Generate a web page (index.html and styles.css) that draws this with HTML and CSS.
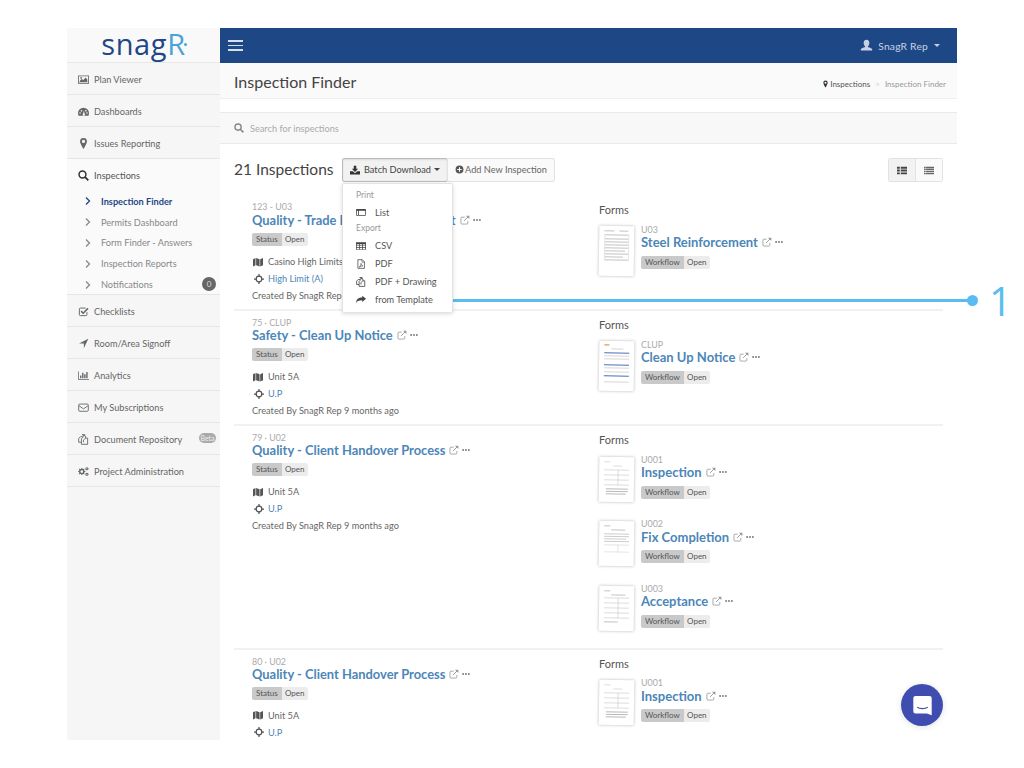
FILE: index.html
```html
<!DOCTYPE html>
<html>
<head>
    <meta charset="utf-8">
    <title>Inspection Finder</title>
    <link rel="stylesheet" href="styles.css">
</head>
<body>

<svg class="sprite" xmlns="http://www.w3.org/2000/svg">
    <symbol id="i-picture" viewBox="0 0 16 16"><path d="M0 2h16v12H0zM1.2 3.2v9.6h13.6V3.2z"/><path d="M2.5 11.5V10l3-3 2 2 3.5-4 2.500 3v3.500z"/><circle cx="4.500" cy="5.500" r="1.300"/></symbol>
    <symbol id="i-dash" viewBox="0 0 16 16"><path d="M8 2.500a8 8 0 0 0-8 8c0 1.300.3 2.400.8 3.500h14.400c.5-1.100.8-2.200.8-3.500a8 8 0 0 0-8-8zM3 9a1.200 1.200 0 1 1 0 2.400A1.200 1.200 0 0 1 3 9zm2-3.200a1.200 1.200 0 1 1 0 2.400 1.200 1.200 0 0 1 0-2.400zm6.500 0a1.200 1.200 0 1 1 0 2.400 1.200 1.200 0 0 1 0-2.400zM13 9a1.200 1.200 0 1 1 0 2.400A1.200 1.200 0 0 1 13 9zM8.600 6.500 9.500 11a1.700 1.700 0 1 1-2 0z"/></symbol>
    <symbol id="i-marker" viewBox="0 0 16 16"><path d="M8 0a5 5 0 0 0-5 5c0 3 5 11 5 11s5-8 5-11a5 5 0 0 0-5-5zm0 2.600a2.400 2.400 0 1 1 0 4.800 2.400 2.400 0 0 1 0-4.800z"/></symbol>
    <symbol id="i-search" viewBox="0 0 16 16"><circle cx="6.500" cy="6.500" r="5" fill="none" stroke="currentColor" stroke-width="2.200"/><path d="M10 10l5 5" fill="none" stroke="currentColor" stroke-width="2.600"/></symbol>
    <symbol id="i-chev" viewBox="0 0 8 10"><path d="M2 1.500 5.500 5 2 8.500" fill="none" stroke="currentColor" stroke-width="1.300"/></symbol>
    <symbol id="i-check" viewBox="0 0 16 16"><path d="M13 9v3.500a1.500 1.500 0 0 1-1.500 1.500h-8A1.500 1.500 0 0 1 2 12.500v-8A1.500 1.500 0 0 1 3.500 3H11" fill="none" stroke="currentColor" stroke-width="1.400"/><path d="M4.500 7.500 7.500 10.500 14.500 3.500" fill="none" stroke="currentColor" stroke-width="2.200"/></symbol>
    <symbol id="i-arrow" viewBox="0 0 16 16"><path d="M15 1 8.500 15V8H1.500z"/></symbol>
    <symbol id="i-chart" viewBox="0 0 16 16"><path d="M0 2h1.100v11H16v1.200H0z"/><path d="M3 8h2v4H3zM6 4h2v8H6zM9 6h2v6H9zM12 3h2v9h-2z"/></symbol>
    <symbol id="i-mail" viewBox="0 0 16 16"><rect x="1" y="3" width="14" height="10.500" rx="1.500" fill="none" stroke="currentColor" stroke-width="1.300"/><path d="M1.500 5.500 8 10l6.500-4.500" fill="none" stroke="currentColor" stroke-width="1.300"/></symbol>
    <symbol id="i-files" viewBox="0 0 16 16"><path d="M6 1h4L7 4H3.500L1 6.500V12h4v3h9V6h-3V3z" fill="none" stroke="currentColor" stroke-width="1.300"/><path d="M5 12V7l3-3M11 6 8 9v3" fill="none" stroke="currentColor" stroke-width="1.300"/></symbol>
    <symbol id="i-cogs" viewBox="0 0 16 16"><circle cx="5.500" cy="8" r="3" fill="none" stroke="currentColor" stroke-width="2"/><path d="M5.500 2.800v2M5.500 11.200v2M.3 8h2M8.700 8h2M1.800 4.300l1.400 1.400M7.800 10.300l1.400 1.400M9.200 4.300 7.800 5.700M3.200 10.300l-1.400 1.400" stroke="currentColor" stroke-width="1.500"/><circle cx="13" cy="4" r="1.600" fill="none" stroke="currentColor" stroke-width="1.500"/><circle cx="13" cy="12" r="1.600" fill="none" stroke="currentColor" stroke-width="1.500"/></symbol>
    <symbol id="i-download" viewBox="0 0 16 16"><path d="M6 1h4v5h3L8 11 3 6h3z"/><path d="M0 10h4.500L8 13l3.500-3H16v5H0z"/></symbol>
    <symbol id="i-plus" viewBox="0 0 16 16"><path d="M8 1a7 7 0 1 0 0 14A7 7 0 0 0 8 1zM7 4h2v3h3v2H9v3H7V9H4V7h3z"/></symbol>
    <symbol id="i-print" viewBox="0 0 16 16"><path d="M1.500 3h13A1.500 1.500 0 0 1 16 4.500v8a1.500 1.500 0 0 1-1.500 1.500h-13A1.500 1.500 0 0 1 0 12.500v-8A1.500 1.500 0 0 1 1.500 3zM1.200 6v6.800h2V6zm3.300 0v6.800h10.300V6z"/></symbol>
    <symbol id="i-table" viewBox="0 0 16 16"><path d="M0 2h16v12H0zM1.200 5v2h3.600V5zm4.800 0v2h4V5zm5.200 0v2h3.600V5zM1.200 8v2h3.600V8zM6 8v2h4V8zm5.200 0v2h3.600V8zM1.200 11v2h3.600v-2zM6 11v2h4v-2zm5.200 0v2h3.600v-2z"/></symbol>
    <symbol id="i-pdf" viewBox="0 0 16 16"><path d="M3 1h7l3.500 3.500V15H3z" fill="none" stroke="currentColor" stroke-width="1.200"/><path d="M9.500 1v4h4M5 13c2-1 3-4 3-6 .5 2 1.500 3.500 3 4-2 0-4 .8-6 2z" fill="none" stroke="currentColor"/></symbol>
    <symbol id="i-share" viewBox="0 0 16 16"><path d="M16 6 10 1v3C4 4 .5 6.500 0 13c1.500-3 4-4.500 10-4.500V11z"/></symbol>
    <symbol id="i-map" viewBox="0 0 16 16"><path d="M0 3.500 4 1.500v11.500L0 15zM5 1.500 10.500 3.500V15L5 13zM11.500 3.500 16 1.500V13l-4.500 2z"/></symbol>
    <symbol id="i-cross" viewBox="0 0 16 16"><circle cx="8" cy="8" r="4.500" fill="none" stroke="currentColor" stroke-width="2"/><path d="M8 0v4.500M8 11.500V16M0 8h4.500M11.500 8H16" stroke="currentColor" stroke-width="2"/></symbol>
    <symbol id="i-ext" viewBox="0 0 16 16"><path d="M12.500 9.500V13a1.500 1.500 0 0 1-1.500 1.500H3A1.500 1.500 0 0 1 1.500 13V5A1.500 1.500 0 0 1 3 3.500h4.500" fill="none" stroke="currentColor" stroke-width="1.300"/><path d="M6.500 9.500 14 2" fill="none" stroke="currentColor" stroke-width="1.500"/><path d="M9.500 1H15v5.500z"/></symbol>
    <symbol id="i-dots" viewBox="0 0 10 4"><circle cx="1.400" cy="2" r="1.200"/><circle cx="5" cy="2" r="1.200"/><circle cx="8.600" cy="2" r="1.200"/></symbol>
    <symbol id="i-thlist" viewBox="0 0 16 14"><path d="M0 1h4.500v3H0zM6 1h10v3H6zM0 5.500h4.500v3H0zM6 5.500h10v3H6zM0 10h4.500v3H0zM6 10h10v3H6z"/></symbol>
    <symbol id="i-list" viewBox="0 0 16 14"><path d="M0 1h16v2.200H0zM0 4.300h16v2.200H0zM0 7.600h16v2.200H0zM0 10.900h16v2.200H0z" /><path d="M2.600 1h.7v12.100h-.7z" fill="#f7f7f7"/></symbol>
    <symbol id="i-user" viewBox="0 0 16 16"><path d="M8 1c2 0 3.500 1.500 3.500 3.800 0 1.700-.8 3.200-1.800 4 0 1 .5 1.200 2 1.800 2 .8 3.300 1.400 3.300 2.400v1H1v-1c0-1 1.300-1.600 3.300-2.400 1.500-.6 2-.8 2-1.800-1-.8-1.800-2.300-1.800-4C4.500 2.500 6 1 8 1z"/></symbol>
    <symbol id="t-steel" viewBox="0 0 35 50"><path d="M5 5h10M20 5h9M6 9h23M6 13h23M6 16h23M6 19h23M6 22h23M6 25h20M6 28h23M6 31h18M6 34h23" stroke="#999" stroke-width=".6"/><path d="M5.500 8v27M29.500 8v27" stroke="#ccc" stroke-width=".5"/></symbol>
    <symbol id="t-clup" viewBox="0 0 35 50"><path d="M5 4h5" stroke="#e59a3c" stroke-width="1.200"/><path d="M12 8h12M5 15h25M5 18h25M5 27h25M5 31h25M5 41h25" stroke="#bbb" stroke-width=".6"/><path d="M5 12h25M5 24h25M5 35h25" stroke="#4a6fb5" stroke-width="1"/></symbol>
    <symbol id="t-insp" viewBox="0 0 35 45"><path d="M5 5h6M14 9h9M5 13h25M5 18h25M5 23h25M5 28h25M19 13v15" stroke="#bbb" stroke-width=".5"/><path d="M7 32h22M7 34.500h22M7 37h20" stroke="#888" stroke-width=".6"/></symbol>
    <symbol id="t-fix" viewBox="0 0 35 45"><path d="M5 5h6M12 9h14" stroke="#999" stroke-width=".6"/><path d="M5 13h25M5 15.500h25M5 18h22M5 20.500h25" stroke="#aaa" stroke-width=".6"/><path d="M5 24h25M5 31h25M19 24v7" stroke="#ccc" stroke-width=".5"/></symbol>
    <symbol id="t-acc" viewBox="0 0 35 45"><path d="M5 5h6M12 9h14" stroke="#999" stroke-width=".6"/><path d="M5 12h25M5 17h25M5 22h25M5 27h25M5 32h25M19 12v20" stroke="#bbb" stroke-width=".5"/><path d="M5 36h14" stroke="#999" stroke-width=".6"/></symbol>
</svg>

<div class="frame">
    <aside class="sidebar">
        <div class="logo">snag<span class="logo-r">R</span></div>
        <a class="nav-item"><svg class="ic"><use href="#i-picture"/></svg>Plan Viewer</a>
        <a class="nav-item"><svg class="ic"><use href="#i-dash"/></svg>Dashboards</a>
        <a class="nav-item"><svg class="ic"><use href="#i-marker"/></svg>Issues Reporting</a>
        <div class="nav-group">
            <a class="nav-head"><svg class="ic ic-dark"><use href="#i-search"/></svg>Inspections</a>
            <a class="sub-item sub-active"><svg class="chev"><use href="#i-chev"/></svg>Inspection Finder</a>
            <a class="sub-item"><svg class="chev"><use href="#i-chev"/></svg>Permits Dashboard</a>
            <a class="sub-item"><svg class="chev"><use href="#i-chev"/></svg>Form Finder - Answers</a>
            <a class="sub-item"><svg class="chev"><use href="#i-chev"/></svg>Inspection Reports</a>
            <a class="sub-item"><svg class="chev"><use href="#i-chev"/></svg>Notifications<span class="count">0</span></a>
        </div>
        <a class="nav-item"><svg class="ic"><use href="#i-check"/></svg>Checklists</a>
        <a class="nav-item"><svg class="ic"><use href="#i-arrow"/></svg>Room/Area Signoff</a>
        <a class="nav-item"><svg class="ic"><use href="#i-chart"/></svg>Analytics</a>
        <a class="nav-item"><svg class="ic"><use href="#i-mail"/></svg>My Subscriptions</a>
        <a class="nav-item"><svg class="ic"><use href="#i-files"/></svg>Document Repository<span class="beta">Beta</span></a>
        <a class="nav-item"><svg class="ic"><use href="#i-cogs"/></svg>Project Administration</a>
    </aside>

    <main class="main">
        <header class="topbar">
            <div class="burger"><span></span><span></span><span></span></div>
            <div class="user"><svg class="ic-user"><use href="#i-user"/></svg>SnagR Rep<span class="caret"></span></div>
        </header>

        <div class="titlebar">
            <h1>Inspection Finder</h1>
            <div class="crumbs">
                <svg class="crumb-ic"><use href="#i-marker"/></svg><span class="crumb-link">Inspections</span>
                <span class="crumb-sep">&gt;</span>
                <span>Inspection Finder</span>
            </div>
        </div>

        <div class="searchbar"><svg class="search-ic"><use href="#i-search"/></svg>Search for inspections</div>

        <div class="content">
            <div class="toolbar">
                <h2>21 Inspections</h2>
                <div class="btn-group">
                    <button class="btn btn-on"><svg class="btn-ic"><use href="#i-download"/></svg>Batch Download<span class="caret caret-dark"></span></button>
                    <button class="btn btn-add"><svg class="btn-ic-add"><use href="#i-plus"/></svg>Add New Inspection</button>
                </div>
                <div class="toggle">
                    <span class="toggle-btn toggle-on"><svg><use href="#i-thlist"/></svg></span>
                    <span class="toggle-btn"><svg><use href="#i-list"/></svg></span>
                </div>
            </div>

            <section class="row row-first">
                <div class="info">
                    <div class="code">123 - U03</div>
                    <div class="name"><a>Quality - Trade Inspection Checklist</a><svg class="ext"><use href="#i-ext"/></svg><svg class="dots"><use href="#i-dots"/></svg></div>
                    <div class="tag"><span class="tag-key">Status</span><span class="tag-val">Open</span></div>
                    <div class="place"><svg><use href="#i-map"/></svg>Casino High Limits</div>
                    <div class="place place-link"><svg><use href="#i-cross"/></svg><a>High Limit (A)</a></div>
                    <div class="created">Created By SnagR Rep 9 months ago</div>
                </div>
                <div class="forms">
                    <div class="forms-label">Forms</div>
                    <div class="form">
                        <div class="thumb"><svg><use href="#t-steel"/></svg></div>
                        <div>
                            <div class="code">U03</div>
                            <div class="name"><a>Steel Reinforcement</a><svg class="ext"><use href="#i-ext"/></svg><svg class="dots"><use href="#i-dots"/></svg></div>
                            <div class="tag"><span class="tag-key">Workflow</span><span class="tag-val">Open</span></div>
                        </div>
                    </div>
                </div>
            </section>

            <section class="row">
                <div class="info">
                    <div class="code">75 · CLUP</div>
                    <div class="name"><a>Safety - Clean Up Notice</a><svg class="ext"><use href="#i-ext"/></svg><svg class="dots"><use href="#i-dots"/></svg></div>
                    <div class="tag"><span class="tag-key">Status</span><span class="tag-val">Open</span></div>
                    <div class="place"><svg><use href="#i-map"/></svg>Unit 5A</div>
                    <div class="place place-link"><svg><use href="#i-cross"/></svg><a>U.P</a></div>
                    <div class="created">Created By SnagR Rep 9 months ago</div>
                </div>
                <div class="forms">
                    <div class="forms-label">Forms</div>
                    <div class="form">
                        <div class="thumb"><svg><use href="#t-clup"/></svg></div>
                        <div>
                            <div class="code">CLUP</div>
                            <div class="name"><a>Clean Up Notice</a><svg class="ext"><use href="#i-ext"/></svg><svg class="dots"><use href="#i-dots"/></svg></div>
                            <div class="tag"><span class="tag-key">Workflow</span><span class="tag-val">Open</span></div>
                        </div>
                    </div>
                </div>
            </section>

            <section class="row">
                <div class="info">
                    <div class="code">79 · U02</div>
                    <div class="name"><a>Quality - Client Handover Process</a><svg class="ext"><use href="#i-ext"/></svg><svg class="dots"><use href="#i-dots"/></svg></div>
                    <div class="tag"><span class="tag-key">Status</span><span class="tag-val">Open</span></div>
                    <div class="place"><svg><use href="#i-map"/></svg>Unit 5A</div>
                    <div class="place place-link"><svg><use href="#i-cross"/></svg><a>U.P</a></div>
                    <div class="created">Created By SnagR Rep 9 months ago</div>
                </div>
                <div class="forms">
                    <div class="forms-label">Forms</div>
                    <div class="form">
                        <div class="thumb thumb-short"><svg><use href="#t-insp"/></svg></div>
                        <div>
                            <div class="code">U001</div>
                            <div class="name"><a>Inspection</a><svg class="ext"><use href="#i-ext"/></svg><svg class="dots"><use href="#i-dots"/></svg></div>
                            <div class="tag"><span class="tag-key">Workflow</span><span class="tag-val">Open</span></div>
                        </div>
                    </div>
                    <div class="form">
                        <div class="thumb thumb-short"><svg><use href="#t-fix"/></svg></div>
                        <div>
                            <div class="code">U002</div>
                            <div class="name"><a>Fix Completion</a><svg class="ext"><use href="#i-ext"/></svg><svg class="dots"><use href="#i-dots"/></svg></div>
                            <div class="tag"><span class="tag-key">Workflow</span><span class="tag-val">Open</span></div>
                        </div>
                    </div>
                    <div class="form">
                        <div class="thumb thumb-short"><svg><use href="#t-acc"/></svg></div>
                        <div>
                            <div class="code">U003</div>
                            <div class="name"><a>Acceptance</a><svg class="ext"><use href="#i-ext"/></svg><svg class="dots"><use href="#i-dots"/></svg></div>
                            <div class="tag"><span class="tag-key">Workflow</span><span class="tag-val">Open</span></div>
                        </div>
                    </div>
                </div>
            </section>

            <section class="row">
                <div class="info">
                    <div class="code">80 · U02</div>
                    <div class="name"><a>Quality - Client Handover Process</a><svg class="ext"><use href="#i-ext"/></svg><svg class="dots"><use href="#i-dots"/></svg></div>
                    <div class="tag"><span class="tag-key">Status</span><span class="tag-val">Open</span></div>
                    <div class="place"><svg><use href="#i-map"/></svg>Unit 5A</div>
                    <div class="place place-link"><svg><use href="#i-cross"/></svg><a>U.P</a></div>
                </div>
                <div class="forms">
                    <div class="forms-label">Forms</div>
                    <div class="form">
                        <div class="thumb thumb-short"><svg><use href="#t-insp"/></svg></div>
                        <div>
                            <div class="code">U001</div>
                            <div class="name"><a>Inspection</a><svg class="ext"><use href="#i-ext"/></svg><svg class="dots"><use href="#i-dots"/></svg></div>
                            <div class="tag"><span class="tag-key">Workflow</span><span class="tag-val">Open</span></div>
                        </div>
                    </div>
                </div>
            </section>
        </div>
    </main>

    <div class="menu">
        <div class="menu-head">Print</div>
        <a class="menu-item"><svg><use href="#i-print"/></svg>List</a>
        <div class="menu-head">Export</div>
        <a class="menu-item"><svg><use href="#i-table"/></svg>CSV</a>
        <a class="menu-item"><svg><use href="#i-pdf"/></svg>PDF</a>
        <a class="menu-item"><svg><use href="#i-files"/></svg>PDF + Drawing</a>
        <a class="menu-item"><svg><use href="#i-share"/></svg>from Template</a>
    </div>

    <div class="chat">
        <svg viewBox="0 0 24 24"><path d="M4 1h16a2.500 2.500 0 0 1 2.500 2.500V23l-5.500-2H4a2.500 2.500 0 0 1-2.500-2.500v-15A2.500 2.500 0 0 1 4 1z" fill="#fff"/><path d="M6 14c3 2 9 2 12 0" fill="none" stroke="#3f4db0" stroke-width="1.300"/></svg>
    </div>
</div>

<!-- callout sits over the page, outside the frame -->
<div class="callout-line"></div>
<div class="callout-dot"></div>
<div class="callout-num">1</div>

</body>
</html>
```

FILE: styles.css
```css
html, body { margin: 0; padding: 0; background: #fff; }
body { font-family: "Lato", "Noto Sans", sans-serif; font-size: 9.2px; color: #666; width: 1024px; height: 768px; overflow: hidden; position: relative; }
a { color: inherit; text-decoration: none; }
svg { fill: currentColor; fill-rule: evenodd; flex: none; }
.sprite { display: none; }

.frame { position: absolute; left: 67px; top: 28px; width: 890px; height: 712px; display: flex; overflow: hidden; background: #fff; }

/* sidebar */
.sidebar { width: 153px; flex: none; background: #f6f6f6; }
.logo { position: relative; height: 35px; background: #f9f9f9; text-align: center; font-family: "Open Sans", sans-serif; font-size: 29px; line-height: 31px; letter-spacing: .6px; color: #1e4785; box-sizing: border-box; border-bottom: 1px solid #e8e8e8; }
.logo-r { color: #4ba3d9; }
.logo::after { content: ""; position: absolute; left: 117px; top: 15px; width: 3px; height: 3px; border-radius: 50%; background: #4ba3d9; }
.nav-item, .nav-head { display: flex; align-items: center; height: 30px; padding: 1px 0 0 11px; border-bottom: 1px solid #e6e6e6; color: #666; position: relative; }
.ic { width: 11px; height: 11px; margin-right: 5px; color: #666; }
.ic-dark { color: #333; }
.nav-group { background: #fafafa; border-bottom: 1px solid #e6e6e6; height: 136px; box-sizing: border-box; }
.nav-head { border-bottom: 0; color: #555; height: 31px; }
.sub-item { display: flex; align-items: center; height: 20.800px; padding-left: 17px; color: #888; position: relative; }
.sub-active { color: #1e4785; font-weight: 700; }
.chev { width: 8px; height: 10px; margin-right: 9px; color: #888; }
.sub-active .chev { color: #1e4785; }
.count { position: absolute; right: 4px; top: 3px; width: 14px; height: 14px; border-radius: 50%; background: #666; color: #ddd; font-size: 8px; line-height: 14px; text-align: center; }
.beta { position: absolute; right: 4px; top: 10px; width: 17px; height: 10px; border-radius: 5px; background: #aaa; color: #eee; font-size: 7px; line-height: 10px; text-align: center; }

/* main column */
.main { flex: 1; min-width: 0; overflow: hidden; }
.topbar { height: 35px; background: #1e4785; display: flex; align-items: center; justify-content: space-between; padding: 0 17px 0 8px; color: #c5d2e4; }
.burger { width: 15px; display: flex; flex-direction: column; gap: 3px; }
.burger span { display: block; height: 1.500px; background: #d5deea; }
.user { display: flex; align-items: center; font-size: 10.300px; letter-spacing: .2px; }
.ic-user { width: 13px; height: 13px; margin-right: 5px; color: #c5d2e4; }
.caret { display: inline-block; margin-left: 6px; border-top: 3px solid currentColor; border-left: 3px solid transparent; border-right: 3px solid transparent; }
.caret-dark { color: #444; margin-left: 3px; }

.titlebar { height: 36px; background: #fafafa; border-bottom: 1px solid #eee; display: flex; align-items: center; justify-content: space-between; padding: 2px 11px 0 14px; box-sizing: border-box; }
.titlebar h1 { margin: 0; font-size: 16px; font-weight: 400; color: #444; }
.crumbs { font-size: 8px; color: #999; display: flex; align-items: center; margin-top: 5px; }
.crumb-ic { width: 7px; height: 8px; color: #333; margin-right: 1px; }
.crumb-link { color: #555; }
.crumb-sep { color: #ccc; margin: 0 5px; }

.searchbar { margin-top: 13px; height: 32px; box-sizing: border-box; background: #f8f8f8; border-top: 1px solid #eaeaea; border-bottom: 1px solid #eaeaea; padding-left: 14px; display: flex; align-items: center; color: #aaa; }
.search-ic { width: 10px; height: 10px; margin-right: 6px; color: #888; }

.content { padding: 0 14px; }
.toolbar { display: flex; align-items: center; height: 24px; margin-top: 14px; }
.toolbar h2 { margin: -2px 7px 0 0; font-size: 15.500px; font-weight: 400; color: #444; width: 101px; white-space: nowrap; }
.btn-group { display: flex; }
.btn { height: 24px; font: inherit; color: #666; background: #f6f6f6; border: 1px solid #e2e2e2; padding: 0 0 1px; display: flex; align-items: center; justify-content: center; border-radius: 2px; }
.btn-on { width: 106px; background: #f2f2f2; border-color: #bbb; color: #444; box-shadow: inset 0 1px 2px rgba(0,0,0,.1); }
.btn-add { width: 108px; margin-left: -1px; background: #fafafa; }
.btn-ic { width: 10px; height: 10px; margin-right: 4px; color: #333; }
.btn-ic-add { width: 9px; height: 9px; margin-right: 1px; color: #555; }
.toggle { margin-left: auto; display: flex; border-radius: 2px; border: 1px solid #e2e2e2; }
.toggle-btn { width: 26px; height: 22px; display: flex; align-items: center; justify-content: center; background: #fafafa; color: #666; }
.toggle-on { background: #f2f2f2; color: #444; border-right: 1px solid #e2e2e2; }
.toggle-btn svg { width: 10px; height: 9px; }

/* inspection rows */
.row { display: flex; border-bottom: 2px solid #f1f1f1; padding: 6px 0 5px; }
.row-first { padding: 19px 0 5px; }
.row-first .info .name { margin-top: 1px; }
.info { width: 365px; padding-left: 18px; box-sizing: border-box; flex: none; }
.code { font-size: 8.900px; line-height: 11px; color: #aaa; }
.name { display: flex; align-items: center; height: 14px; white-space: nowrap; }
.name a { font-size: 12.900px; font-weight: 700; color: #4c86b8; }
.ext { width: 10px; height: 10px; margin-left: 4px; color: #999; }
.dots { width: 8px; height: 4px; margin-left: 3px; color: #777; }
.tag { display: flex; width: max-content; margin-top: 6px; font-size: 8px; line-height: 13px; border-radius: 2px; overflow: hidden; color: #555; }
.tag-key { background: #c9c9c9; padding: 0 4px; }
.tag-val { background: #ececec; width: 26px; text-align: center; }
.place { display: flex; align-items: center; height: 17px; }
.tag + .place { margin-top: 7px; }
.place svg { width: 10px; height: 10px; margin: 0 5px 0 1px; color: #555; }
.place-link svg { margin-left: 2px; margin-right: 4px; }
.place-link a { color: #4c86b8; }
.created { height: 17px; line-height: 17px; }

.forms { flex: 1; padding-top: 1px; }
.row-first .forms { padding-top: 2px; }
.forms-label { font-size: 11px; color: #555; line-height: 14px; margin-bottom: 6.500px; }
.form { display: flex; align-items: flex-start; height: 64.500px; }
.row .form:last-child { height: 60px; }
.thumb { width: 35px; height: 50px; margin: 2px 7px 0 0; background: #fff; box-shadow: 0 0 3px rgba(0,0,0,.3); transform: rotate(1deg); flex: none; }
.thumb svg { width: 35px; height: 50px; display: block; }
.thumb-short { height: 45px; margin-top: 3px; }
.thumb-short svg { height: 45px; }
.form .name { margin-top: .5px; }
.form .name a { font-size: 13px; }
.form .tag { margin-top: 6.500px; }

/* batch download menu */
.menu { position: absolute; left: 275px; top: 155px; width: 111px; height: 130px; box-sizing: border-box; padding-top: 4.500px; background: #fff; border: 1px solid #e4e4e4; border-radius: 2px; box-shadow: 0 1px 4px rgba(0,0,0,.15); z-index: 3; }
.menu-head { height: 15.500px; line-height: 13px; padding-left: 13px; font-size: 8.500px; color: #999; }
.menu-item { display: flex; align-items: center; height: 18px; padding-left: 13px; margin-top: -1px; margin-bottom: 1px; color: #555; }
.menu-item svg { width: 10px; height: 10px; margin-right: 9px; color: #444; }

.chat { position: absolute; left: 834px; top: 656px; width: 42px; height: 42px; border-radius: 50%; background: #3f4db0; display: flex; align-items: center; justify-content: center; box-shadow: 0 1px 6px rgba(0,0,0,.12); }
.chat svg { width: 21px; height: 21px; }

/* callout */
.callout-line { position: absolute; left: 453px; top: 299px; width: 519px; height: 3px; background: #5bbcf2; }
.callout-dot { position: absolute; left: 967px; top: 295px; width: 11px; height: 11px; border-radius: 50%; background: #5bbcf2; }
.callout-num { position: absolute; left: 989px; top: 279px; font-family: "Open Sans", sans-serif; font-size: 40px; line-height: 44px; color: #5bbcf2; }
```
